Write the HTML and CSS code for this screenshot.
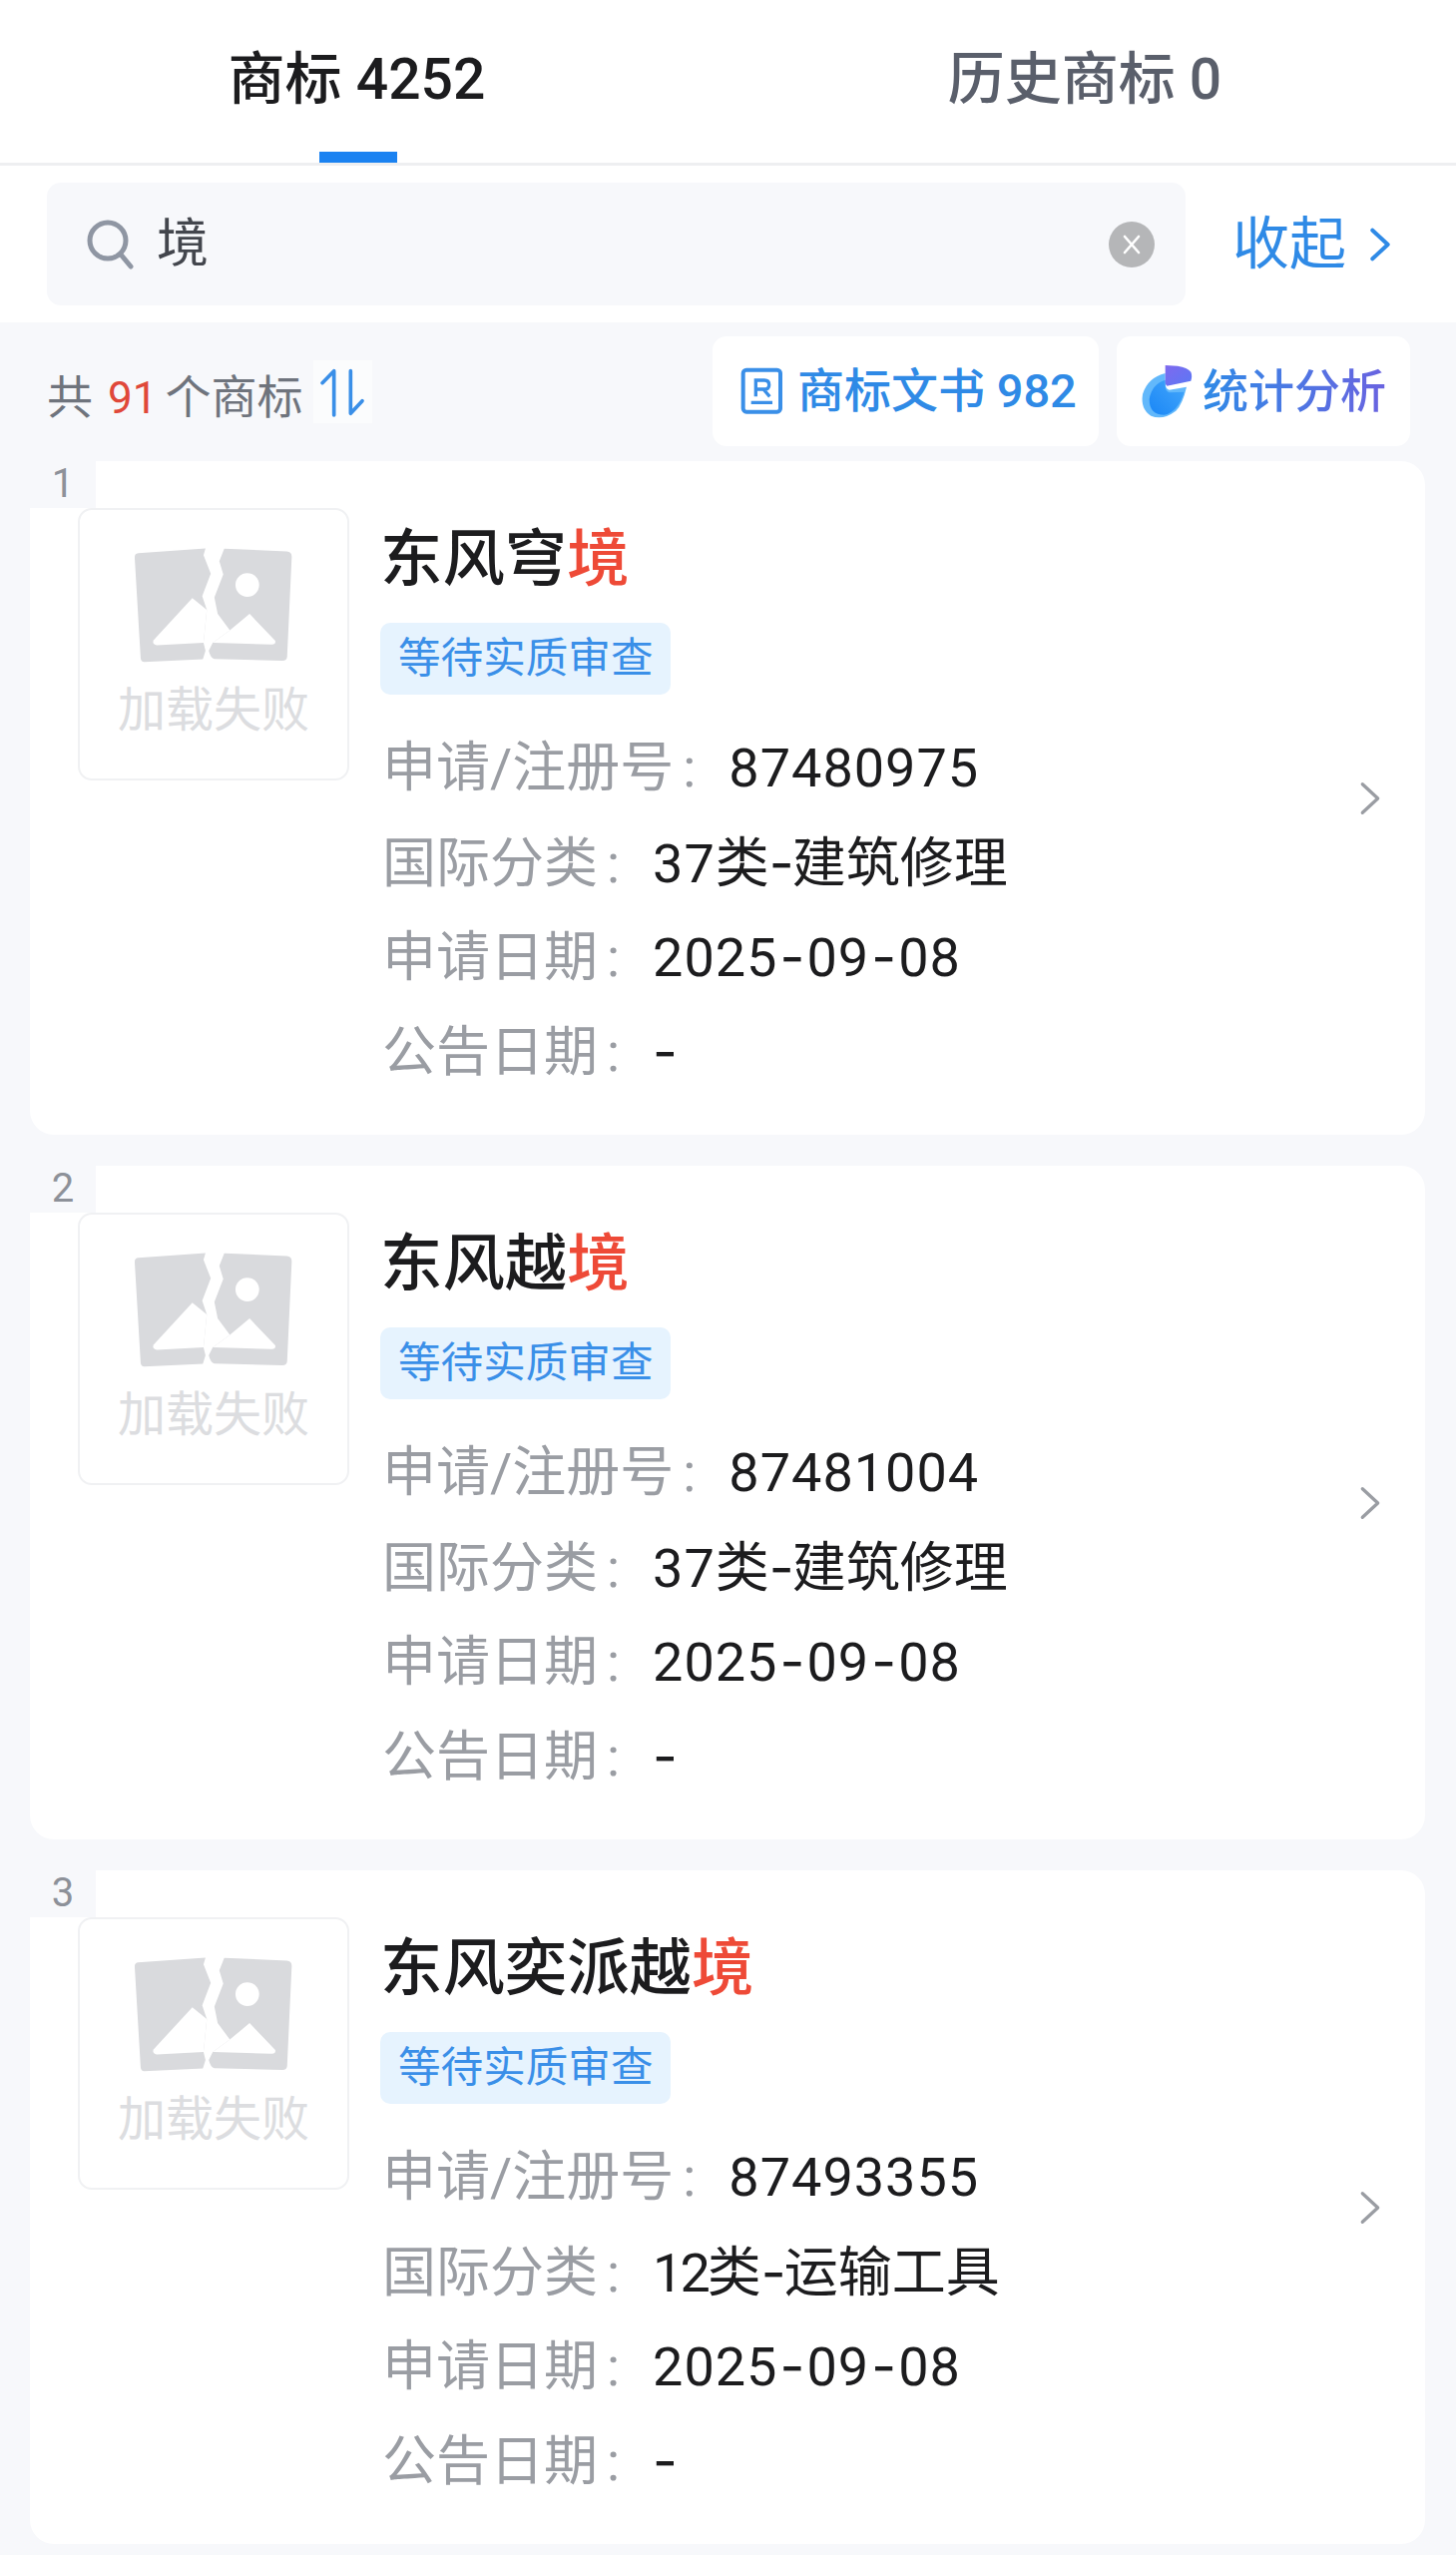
FILE: index.html
```html
<!DOCTYPE html>
<html lang="zh-CN">
<head>
<meta charset="utf-8">
<title>商标</title>
<link rel="stylesheet" href="styles.css">
</head>
<body>
<svg class="defs" width="0" height="0" aria-hidden="true">
  <defs>
    <linearGradient id="pieBlue" x1="0" y1="1" x2="1" y2="0"><stop offset="0" stop-color="#1a86f6"/><stop offset="1" stop-color="#45a8fb"/></linearGradient>
    <linearGradient id="piePurple" x1="0" y1="0" x2="1" y2="1"><stop offset="0" stop-color="#7f69ee"/><stop offset="1" stop-color="#5a78f5"/></linearGradient>
    <symbol id="broken" viewBox="400 285 485 355">
      <path fill="#d9dadd" d="M414 306L618 291L612 312L634 368L608 436L622 478L612 578L618 602L610 628L432 636Q422 636 421 625L403 320Q402 307 414 306Z"/>
      <path fill="#d9dadd" d="M675 292L865 300Q880 301 880 316L866 620Q865 632 852 632L645 627Q634 626 628 602L640 578L692 540L655 490L645 440L672 370L660 330Z"/>
      <path fill="#fff" d="M578 442L622 478L612 578L470 585Q455 582 460 570Z"/>
      <path fill="#fff" d="M692 540L752 490L830 572Q832 583 820 583L640 578Z"/>
      <circle fill="#fff" cx="745" cy="402" r="36"/>
    </symbol>
    <symbol id="chev" viewBox="0 0 20 32">
      <path d="M3 3L17 16L3 29" fill="none" stroke="currentColor" stroke-linecap="round" stroke-linejoin="round"/>
    </symbol>
  </defs>
</svg>

<header class="tabs">
  <div class="tab tab-active">商标 4252<span class="tab-bar"></span></div>
  <div class="tab">历史商标 0</div>
</header>

<section class="search-row">
  <div class="search">
    <svg class="search-icon" viewBox="0 0 47 50"><circle cx="21" cy="21" r="18" fill="none" stroke="#8f96a3" stroke-width="5"/><path d="M34 35L44 47" fill="none" stroke="#8f96a3" stroke-width="5" stroke-linecap="round"/></svg>
    <span class="search-text">境</span>
    <span class="clear"><svg viewBox="0 0 46 46"><path d="M16 15L30 31M30 15L16 31" stroke="#fff" stroke-width="2.6" stroke-linecap="round"/></svg></span>
  </div>
  <div class="collapse">收起<svg class="collapse-chev"><use href="#chev"/></svg></div>
</section>

<section class="toolbar">
  <div class="total"><span class="total-text">共<em>91</em>个商标</span>
    <svg class="sort" viewBox="0 0 240 240"><rect x="18" y="30" width="177" height="189" fill="#fff" opacity=".55"/><path d="M80 195V62L45 98M130 62V190L165 152" fill="none" stroke="#3a8fe8" stroke-width="11" stroke-linecap="round" stroke-linejoin="round"/></svg>
  </div>
  <div class="pill pill-doc">
    <svg class="doc-icon" viewBox="0 0 240 240"><rect x="44" y="62" width="112" height="126" rx="10" fill="none" stroke="#3a8fe8" stroke-width="12"/><path d="M82 142V93H108Q122 93 122 107Q122 120 108 120H82M105 120L124 142M68 160H132" fill="none" stroke="#3a8fe8" stroke-width="10"/></svg>
    <span>商标文书 982</span>
  </div>
  <div class="pill pill-stat">
    <svg class="stat-icon" viewBox="0 0 240 240">
      <path fill="#62b8fb" d="M113 72Q60 85 45 135Q38 180 70 200Q105 215 145 185Q165 165 177 113L125 122Q115 120 113 105Z"/>
      <path fill="url(#pieBlue)" d="M113 92Q72 105 65 150Q65 197 110 197Q150 190 170 128L125 130Q113 126 113 108Z"/>
      <path fill="url(#piePurple)" d="M113 48L150 50Q180 55 190 68Q195 80 190 95L118 110Q113 108 113 100Z"/>
    </svg>
    <span class="stat-text">统计分析</span>
  </div>
</section>

<main class="list">
  <article class="card">
    <span class="index">1</span>
    <div class="thumb"><svg class="thumb-icon"><use href="#broken"/></svg><span class="thumb-text">加载失败</span></div>
    <div class="info">
      <h2 class="title">东风穹<mark>境</mark></h2>
      <span class="tag">等待实质审查</span>
      <dl class="rows">
        <div class="row"><dt>申请/注册号<i>:</i></dt><dd>87480975</dd></div>
        <div class="row"><dt>国际分类<i>:</i></dt><dd>37<span class="cn">类</span><span class="dash dash-tight">-</span><span class="cn">建筑修理</span></dd></div>
        <div class="row"><dt>申请日期<i>:</i></dt><dd>2025<span class="dash">-</span>09<span class="dash">-</span>08</dd></div>
        <div class="row"><dt>公告日期<i>:</i></dt><dd><span class="dash dash-tight">-</span></dd></div>
      </dl>
    </div>
    <svg class="card-chev"><use href="#chev"/></svg>
  </article>
  <article class="card">
    <span class="index">2</span>
    <div class="thumb"><svg class="thumb-icon"><use href="#broken"/></svg><span class="thumb-text">加载失败</span></div>
    <div class="info">
      <h2 class="title">东风越<mark>境</mark></h2>
      <span class="tag">等待实质审查</span>
      <dl class="rows">
        <div class="row"><dt>申请/注册号<i>:</i></dt><dd>87481004</dd></div>
        <div class="row"><dt>国际分类<i>:</i></dt><dd>37<span class="cn">类</span><span class="dash dash-tight">-</span><span class="cn">建筑修理</span></dd></div>
        <div class="row"><dt>申请日期<i>:</i></dt><dd>2025<span class="dash">-</span>09<span class="dash">-</span>08</dd></div>
        <div class="row"><dt>公告日期<i>:</i></dt><dd><span class="dash dash-tight">-</span></dd></div>
      </dl>
    </div>
    <svg class="card-chev"><use href="#chev"/></svg>
  </article>
  <article class="card">
    <span class="index">3</span>
    <div class="thumb"><svg class="thumb-icon"><use href="#broken"/></svg><span class="thumb-text">加载失败</span></div>
    <div class="info">
      <h2 class="title">东风奕派越<mark>境</mark></h2>
      <span class="tag">等待实质审查</span>
      <dl class="rows">
        <div class="row"><dt>申请/注册号<i>:</i></dt><dd>87493355</dd></div>
        <div class="row"><dt>国际分类<i>:</i></dt><dd><span class="narrow">12</span><span class="cn">类</span><span class="dash dash-tight">-</span><span class="cn">运输工具</span></dd></div>
        <div class="row"><dt>申请日期<i>:</i></dt><dd>2025<span class="dash">-</span>09<span class="dash">-</span>08</dd></div>
        <div class="row"><dt>公告日期<i>:</i></dt><dd><span class="dash dash-tight">-</span></dd></div>
      </dl>
    </div>
    <svg class="card-chev"><use href="#chev"/></svg>
  </article>
</main>
</body>
</html>
```
FILE: styles.css
```css
* { box-sizing: border-box; }
html, body { margin: 0; padding: 0; }
body {
  width: 1459px;
  height: 2560px;
  overflow: hidden;
  background: #f7f8fb;
  color: #1c1c1e;
  font-family: Roboto, "Noto Sans CJK SC", sans-serif;
}
.defs { position: absolute; }

.tabs {
  display: grid;
  grid-template-columns: 715px 1fr;
  height: 166px;
  background: #fff;
  border-bottom: 3px solid #eeeff1;
}
.tab {
  position: relative;
  text-align: center;
  padding-top: 41px;
  font-size: 57px;
  line-height: 78px;
  font-weight: 500;
  color: #5a5f6b;
}
.tab-active { color: #1c1c1e; }
.tab-bar {
  position: absolute;
  left: 320px;
  top: 152px;
  width: 78px;
  height: 11px;
  background: #1b82f1;
}

.search-row {
  display: flex;
  align-items: center;
  height: 157px;
  padding-left: 47px;
  background: #fff;
}
.search {
  display: flex;
  align-items: center;
  width: 1141px;
  height: 123px;
  padding: 0 31px 0 40px;
  border-radius: 14px;
  background: #f7f8fb;
}
.search-icon { width: 47px; height: 50px; flex: none; }
.search-text { margin-left: 23px; font-size: 52px; line-height: 60px; color: #43464d; }
.clear { margin-left: auto; width: 46px; height: 46px; border-radius: 50%; background: #b5b6b8; }
.clear svg { display: block; width: 46px; height: 46px; }
.collapse {
  display: flex;
  align-items: center;
  margin-left: 47px;
  font-size: 57px;
  line-height: 70px;
  color: #2f8ae6;
}
.collapse-chev { width: 22px; height: 42px; margin-left: 23px; stroke-width: 3.6; }

.toolbar {
  display: flex;
  align-items: center;
  height: 139px;
  padding: 12px 46px 14px 47px;
}
.total {
  display: flex;
  align-items: center;
  flex: 1;
  font-size: 46px;
  color: #6f747d;
}
.total-text { position: relative; top: 2px; }
.total em { margin: 0 8px 0 15px; font-style: normal; color: #e0483a; font-size: 44px; }
.sort { margin-left: 5px; width: 80px; height: 80px; margin-top: -2px; }
.pill {
  display: flex;
  align-items: center;
  height: 110px;
  border-radius: 14px;
  background: #fff;
  font-size: 47px;
  line-height: 60px;
  font-weight: 500;
  color: #2f8ae6;
}
.pill-doc { width: 387px; padding-left: 16px; margin-right: 18px; }
.pill-stat { width: 294px; padding-left: 11px; font-size: 46px; }
.doc-icon { width: 80px; height: 80px; margin: -4px -11px 0 0; flex: none; }
.stat-icon { width: 80px; height: 80px; margin: -4px -5px 0 0; flex: none; }
.stat-text {
  background: linear-gradient(90deg, #2f8ae6, #6a63e0);
  -webkit-background-clip: text;
  background-clip: text;
  color: transparent;
}

.list { display: flex; flex-direction: column; gap: 31px; padding: 0 31px 0 30px; }
.card {
  position: relative;
  display: flex;
  height: 675px;
  padding: 47px 0 0 48px;
  border-radius: 24px;
  background: #fff;
}
.index {
  position: absolute;
  left: 0;
  top: 0;
  width: 66px;
  height: 47px;
  text-align: center;
  font-size: 40px;
  line-height: 46px;
  color: #8d9199;
  background: #f7f8fb;
}
.thumb {
  display: flex;
  flex-direction: column;
  align-items: center;
  flex: none;
  width: 272px;
  height: 273px;
  padding-top: 36px;
  border: 2px solid #f0f1f3;
  border-radius: 14px;
}
.thumb-icon { width: 160px; height: 118px; }
.thumb-text { margin-top: 17px; font-size: 48px; line-height: 60px; color: #dcdde0; }
.info { margin-left: 31px; display: flex; flex-direction: column; align-items: flex-start; }
.title {
  margin: 7px 0 0 0;
  font-size: 62.4px;
  line-height: 90px;
  font-weight: 500;
  color: #1c1c1e;
}
.title mark { background: none; color: #ee4a37; }
.tag {
  margin-top: 18px;
  height: 72px;
  padding: 0 17px 0 18px;
  border-radius: 10px;
  background: #e6f3fe;
  font-size: 42.6px;
  line-height: 70px;
  color: #3a8fe8;
}
.rows { margin: 27px 0 0 2px; }
.row { display: flex; height: 94.6px; align-items: baseline; font-size: 54px; line-height: 94.6px; }
.row dt { color: #9a9da3; }
.row dt i { font-style: normal; margin-left: 9px; }
.row dd { margin: 0 0 0 33px; color: #1c1c1e; letter-spacing: 1px; }
.cn { letter-spacing: 0; }
.narrow { letter-spacing: -3px; }
.dash { display: inline-block; width: 29px; text-align: center; font-family: Inter, sans-serif; letter-spacing: 0; }
.dash-tight { width: 23px; }
.card-chev {
  position: absolute;
  right: 44px;
  top: 320px;
  width: 22px;
  height: 36px;
  color: #9a9da3;
  stroke-width: 3;
}
```
